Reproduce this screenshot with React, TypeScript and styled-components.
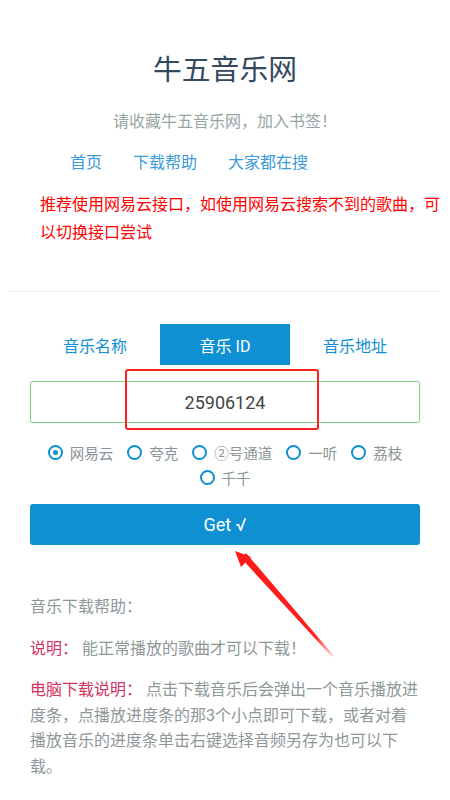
import React from 'react';
import styled, { createGlobalStyle } from 'styled-components';

const GlobalStyle = createGlobalStyle`
  body {
    margin: 0;
    background: #fff;
    font-family: Roboto, "Noto Sans CJK SC", sans-serif;
  }
`;

const sources = ['网易云', '夸克', '②号通道', '一听', '荔枝', '千千'];
const tabs = ['音乐名称', '音乐 ID', '音乐地址'];

const App: React.FC = () => {
  return (
    <React.Fragment>
      <GlobalStyle />
      <Page>
        <Header>
          <Title>牛五音乐网</Title>
          <Subtitle>请收藏牛五音乐网，加入书签！</Subtitle>
          <Nav>
            <NavLink>首页</NavLink>
            <NavLink>下载帮助</NavLink>
            <NavLink>大家都在搜</NavLink>
          </Nav>
          <Notice>推荐使用网易云接口，如使用网易云搜索不到的歌曲，可以切换接口尝试</Notice>
        </Header>
        <Divider />
        <Main>
          <Tabs>
            {tabs.map((tab) => (
              <Tab key={tab} active={tab === '音乐 ID'}>
                {tab}
              </Tab>
            ))}
          </Tabs>
          <Input value="25906124" readOnly />
          <Highlight />
          <Radios>
            {sources.map((source) => (
              <RadioItem key={source}>
                <RadioCircle checked={source === '网易云'} />
                {source}
              </RadioItem>
            ))}
          </Radios>
          <GetButton>Get √</GetButton>
          <Arrow width="110" height="112" viewBox="0 0 110 112">
            <defs>
              <linearGradient id="fade" x1="0" y1="0" x2="1" y2="1">
                <stop offset="0" stopColor="#ff1a1a" />
                <stop offset="0.8" stopColor="#ff2020" />
                <stop offset="1" stopColor="#ff2020" stopOpacity="0.1" />
              </linearGradient>
            </defs>
            <polygon points="11,12 16,7 104,110 102,111" fill="url(#fade)" />
            <polygon points="5,5 21,11 11,21" fill="#ff1a1a" />
          </Arrow>
          <Help>
            <HelpText>音乐下载帮助：</HelpText>
            <HelpText>
              <Label>说明：</Label> 能正常播放的歌曲才可以下载！
            </HelpText>
            <HelpText>
              <Label>电脑下载说明：</Label> 点击下载音乐后会弹出一个音乐播放进度条，点播放进度条的那3个小点即可下载，或者对着播放音乐的进度条单击右键选择音频另存为也可以下载。
            </HelpText>
          </Help>
        </Main>
      </Page>
    </React.Fragment>
  );
};

const Page = styled.div`
  width: 450px;
  padding-bottom: 20px;
`;

const Header = styled.header`
  padding-top: 50px;
  display: flex;
  flex-direction: column;
`;

const Title = styled.h1`
  margin: 0;
  font-size: 28.8px;
  line-height: 40px;
  font-weight: 400;
  color: #34495e;
  text-align: center;
`;

const Subtitle = styled.p`
  margin: 20px 0 0;
  font-size: 16px;
  line-height: 24px;
  color: #95a5a6;
  text-align: center;
`;

const Nav = styled.nav`
  margin: 17px 0 0 70px;
  display: flex;
  gap: 31px;
`;

const NavLink = styled.a`
  font-size: 16px;
  line-height: 24px;
  color: #3b9ad9;
  cursor: pointer;
`;

const Notice = styled.p`
  margin: 16px 10px 0 40px;
  font-size: 16px;
  line-height: 28px;
  color: #ff0000;
`;

const Divider = styled.hr`
  margin: 44px 10px 0;
  border: 0;
  border-top: 1px solid #eeeeee;
`;

const Main = styled.main`
  position: relative;
  margin: 32px 30px 0;
  display: flex;
  flex-direction: column;
`;

const Tabs = styled.div`
  display: grid;
  grid-template-columns: repeat(3, 1fr);
  height: 41px;
`;

const Tab = styled.div<{ active?: boolean }>`
  display: flex;
  align-items: center;
  justify-content: center;
  font-size: 16px;
  color: ${(p) => (p.active ? '#fff' : '#0e90d2')};
  background: ${(p) => (p.active ? '#0e90d2' : 'transparent')};
`;

const Input = styled.input`
  margin-top: 16px;
  height: 42px;
  box-sizing: border-box;
  border: 1px solid #86cf86;
  border-radius: 2px;
  text-align: center;
  font-family: Roboto, sans-serif;
  font-size: 18px;
  color: #444;
  outline: none;
`;

const Highlight = styled.div`
  position: absolute;
  left: 95px;
  top: 45px;
  width: 194px;
  height: 61px;
  box-sizing: border-box;
  border: 2.5px solid #ff1f1f;
  border-radius: 3px;
  pointer-events: none;
`;

const Radios = styled.div`
  margin-top: 17px;
  display: flex;
  flex-wrap: wrap;
  justify-content: center;
  column-gap: 14px;
`;

const RadioItem = styled.label`
  display: flex;
  align-items: center;
  gap: 7px;
  height: 25px;
  font-size: 14.5px;
  color: #8a9597;
`;

const RadioCircle = styled.span<{ checked?: boolean }>`
  width: 15px;
  height: 15px;
  box-sizing: border-box;
  border: 2px solid #0e90d2;
  border-radius: 50%;
  display: flex;
  align-items: center;
  justify-content: center;
  &::after {
    content: '';
    display: ${(p) => (p.checked ? 'block' : 'none')};
    width: 5px;
    height: 5px;
    border-radius: 50%;
    background: #0e90d2;
  }
`;

const GetButton = styled.button`
  margin-top: 14px;
  height: 41px;
  border: 0;
  border-radius: 3px;
  background: #0e90d2;
  color: #fff;
  font-family: Roboto, sans-serif;
  font-size: 18px;
  cursor: pointer;
`;

const Arrow = styled.svg`
  position: absolute;
  left: 200px;
  top: 222px;
  pointer-events: none;
`;

const Help = styled.section`
  margin-top: 49px;
  display: flex;
  flex-direction: column;
  gap: 16px;
`;

const HelpText = styled.p`
  margin: 0;
  font-size: 16px;
  line-height: 25.6px;
  color: #8e9899;
`;

const Label = styled.span`
  color: #d2335c;
`;

export default App;
